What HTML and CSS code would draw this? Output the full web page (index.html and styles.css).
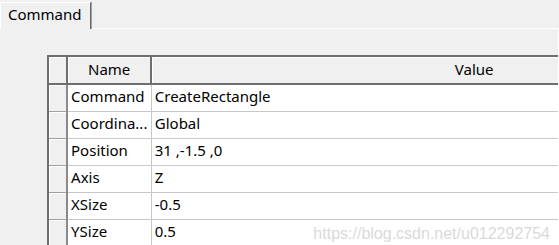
FILE: index.html
```html
<!DOCTYPE html>
<html lang="en">
<head>
    <meta charset="UTF-8">
    <title>Command</title>
    <link rel="stylesheet" href="styles.css">
</head>
<body>

<div class="tabs">
    <div class="tab">Command</div>
</div>

<div class="pane">
    <table class="grid">
        <colgroup>
            <col class="col-head">
            <col class="col-name">
            <col class="col-value">
        </colgroup>
        <thead>
            <tr>
                <th class="corner"></th>
                <th>Name</th>
                <th>Value</th>
            </tr>
        </thead>
        <tbody>
            <tr><td class="rowhead"></td><td class="name">Command</td><td>CreateRectangle</td></tr>
            <tr><td class="rowhead"></td><td class="name">Coordina...</td><td>Global</td></tr>
            <tr><td class="rowhead"></td><td class="name">Position</td><td>31 ,-1.5 ,0</td></tr>
            <tr><td class="rowhead"></td><td class="name">Axis</td><td>Z</td></tr>
            <tr><td class="rowhead"></td><td class="name">XSize</td><td>-0.5</td></tr>
            <tr><td class="rowhead"></td><td class="name">YSize</td><td>0.5</td></tr>
        </tbody>
    </table>
</div>

<div class="watermark">https://blog.csdn.net/u012292754</div>

</body>
</html>
```

FILE: styles.css
```css
body {
    margin: 0;
    width: 559px;
    height: 245px;
    overflow: hidden;
    background-color: #f0f0f0;
    font-family: "Noto Sans", "Open Sans", sans-serif;
    font-size: 15px;
    color: #000;
    position: relative;
}

.tabs {
    height: 28px;
    display: flex;
    align-items: flex-end;
    border-bottom: 1px solid #fff;
}

.tab {
    box-sizing: border-box;
    width: 91px;
    height: 27px;
    padding: 0 0 3px 7px;
    line-height: 23px;
    border-top: 1px solid #fff;
    border-left: 1px solid #fff;
    border-right: 1px solid #696969;
    box-shadow: 1px 0 0 #a0a0a0;
    margin-bottom: -1px;
    background-color: #f0f0f0;
}

.pane {
    box-sizing: border-box;
    height: 216px;
    padding: 26px 0 0 47px;
    border-right: 1px solid #fff;
    overflow: hidden;
}

.grid {
    border-collapse: collapse;
    table-layout: fixed;
    width: 751px;
    border-top: 2px solid #6e6e6e;
    border-left: 2px solid #6e6e6e;
    background-color: #fff;
}

.col-head { width: 19px; }
.col-name { width: 84px; }
.col-value { width: 644px; }

.grid th {
    height: 24px;
    padding: 0 0 2px 0;
    font-weight: normal;
    text-align: center;
    background-color: #f0f0f0;
    border-right: 2px solid #6e6e6e;
    border-bottom: 2px solid #6e6e6e;
    box-shadow: inset 1px 1px 0 #fff;
}

.grid td {
    height: 22px;
    padding: 0 0 4px 3px;
    white-space: nowrap;
    overflow: hidden;
    border-bottom: 1px solid #c8c8c8;
}

.grid td.name {
    padding-left: 3px;
    border-right: 1px solid #c8c8c8;
}

.grid td.rowhead {
    padding: 0;
    height: 26px;
    background-color: #f0f0f0;
    border-right: 2px solid #8a8a8a;
    border-bottom: 1px solid #a0a0a0;
    box-shadow: inset 1px 1px 0 #fff;
}

.watermark {
    position: absolute;
    right: 9px;
    bottom: 2px;
    font-family: "Liberation Sans", Arial, sans-serif;
    font-size: 16px;
    color: #dadada;
}
```
